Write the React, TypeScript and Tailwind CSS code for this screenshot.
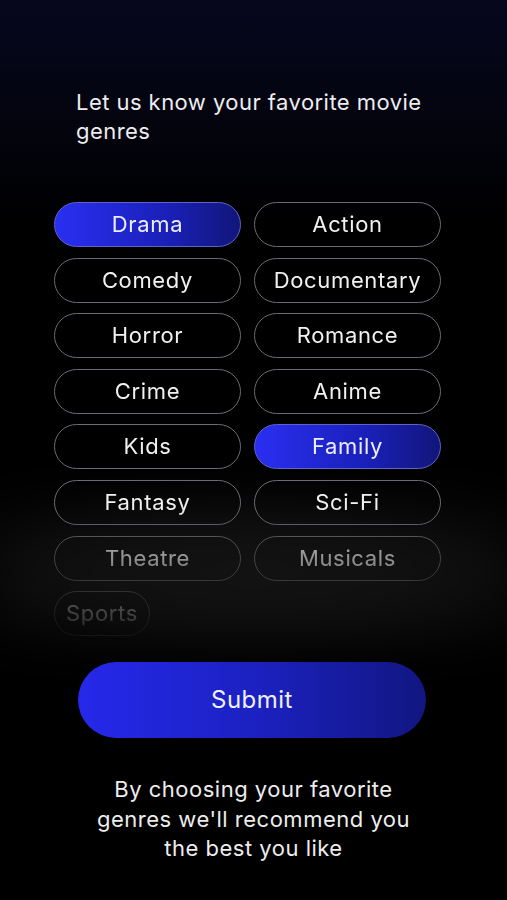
import React from "react";

const genres: { name: string; selected?: boolean; auto?: boolean }[] = [
  { name: "Drama", selected: true },
  { name: "Action" },
  { name: "Comedy" },
  { name: "Documentary" },
  { name: "Horror" },
  { name: "Romance" },
  { name: "Crime" },
  { name: "Anime" },
  { name: "Kids" },
  { name: "Family", selected: true },
  { name: "Fantasy" },
  { name: "Sci-Fi" },
  { name: "Theatre" },
  { name: "Musicals" },
  { name: "Sports", auto: true },
];

export default function App() {
  return (
    <div
      className="relative w-full h-[900px] overflow-hidden bg-black bg-[linear-gradient(to_bottom,#06071e_0px,#03040e_120px,#000_230px)] text-[#ededf0]"
      style={{ fontFamily: "Inter, 'Noto Sans', 'Liberation Sans', sans-serif" }}
    >
      {/* haze behind lower rows */}
      <div className="absolute left-[-20px] right-[-20px] top-[500px] h-[145px] bg-[radial-gradient(ellipse_at_center,#131313_0%,#101010_50%,rgba(0,0,0,0)_100%)] blur-xl" />

      <div className="relative pt-[88px] pl-[76px] pr-[40px] text-[22px] leading-[29px] tracking-[0.45px]">
        Let us know your favorite movie genres
      </div>

      <div className="relative mt-[56px] ml-[54px] w-[387px] grid grid-cols-2 gap-x-[13px] gap-y-[10.6px] [mask-image:linear-gradient(to_bottom,#000_0px,#000_305px,rgba(0,0,0,0.62)_350px,rgba(0,0,0,0.18)_420px,rgba(0,0,0,0.1)_440px)]">
        {genres.map((g) => (
          <div
            key={g.name}
            className={
              "h-[45px] rounded-full flex items-center justify-center text-[22px] tracking-[0.65px] border-[1.5px] " +
              (g.selected
                ? "border-[#5d63c8] bg-[linear-gradient(to_right,#2a2ff2,#1a20b8_60%,#11167a)] text-[#eceefc]"
                : "border-[#6c6c76] text-[#f0f0f0]") +
              (g.auto ? " justify-self-start px-[11px]" : "")
            }
          >
            {g.name}
          </div>
        ))}
      </div>

      <div className="relative mt-[26px] ml-[78px] w-[348px] h-[76px] rounded-full bg-[linear-gradient(to_right,#2529ea,#1c21c2_50%,#111681)] flex items-center justify-center text-[24px] tracking-[0.5px] text-[#eef0ff]">
        Submit
      </div>

      <div className="relative mt-[37px] text-center text-[22px] leading-[29.5px] tracking-[0.5px] text-[#ededed]">
        By choosing your favorite
        <br />
        genres we'll recommend you
        <br />
        the best you like
      </div>
    </div>
  );
}
